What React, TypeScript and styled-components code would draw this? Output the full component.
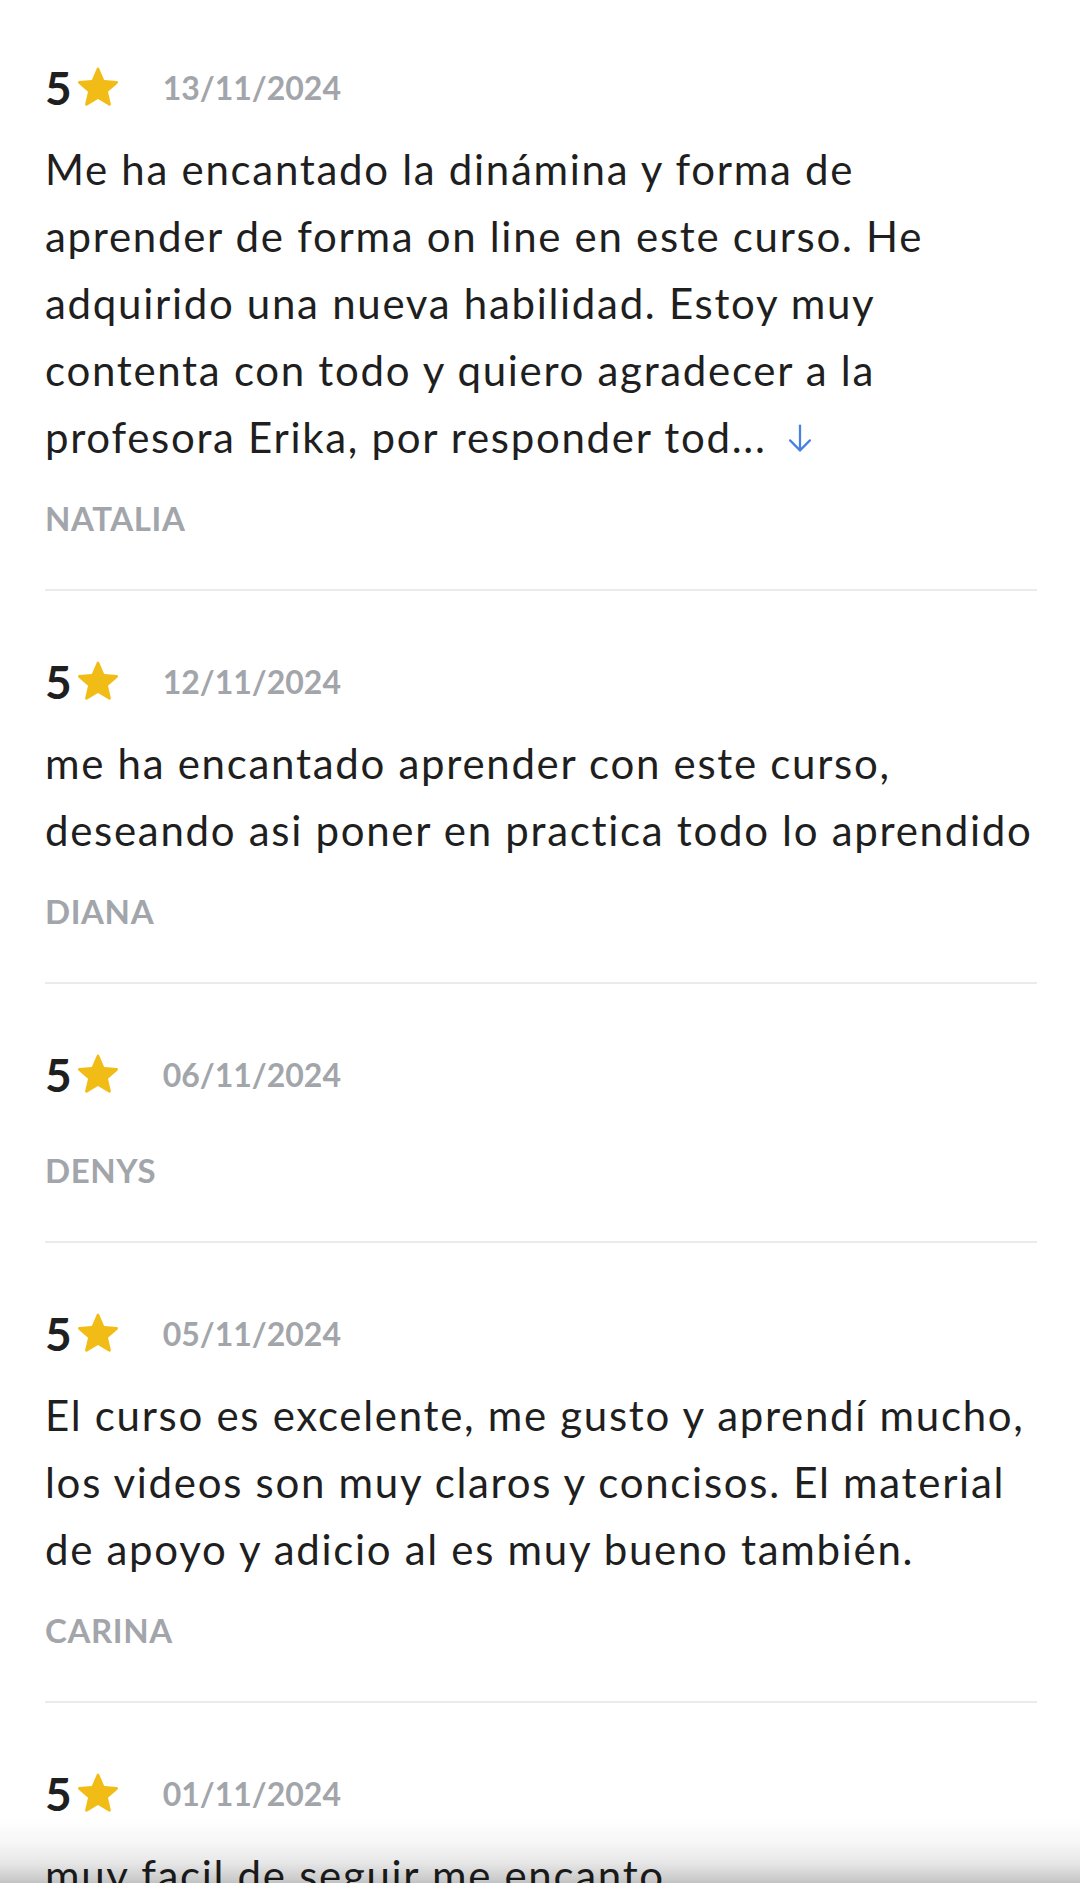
import React from 'react';
import styled, { createGlobalStyle } from 'styled-components';

const GlobalStyle = createGlobalStyle`
  html, body {
    margin: 0;
    padding: 0;
    background: #ffffff;
    font-family: Lato, "Noto Sans", sans-serif;
    overflow: hidden;
  }
`;

const Page = styled.div`
  padding: 60px 43px 0 45px;
  display: flex;
  flex-direction: column;
`;

const Review = styled.div`
  display: flex;
  flex-direction: column;
  padding-bottom: 51px;
  margin-bottom: 63px;
  border-bottom: 2px solid #ebebeb;
`;

const RatingRow = styled.div`
  display: flex;
  align-items: center;
  height: 55px;
  margin-bottom: 21px;
`;

const Score = styled.span`
  font-size: 46px;
  font-weight: 700;
  color: #1f1f1f;
  line-height: 1;
`;

const Star = styled.svg`
  width: 50px;
  height: 50px;
  margin-left: 1px;
  margin-right: 40px;
`;

const DateLabel = styled.span`
  font-size: 32px;
  font-weight: 700;
  color: #a2a5aa;
  line-height: 1;
`;

const Body = styled.p`
  margin: 0 0 27px 0;
  font-size: 42px;
  line-height: 67px;
  letter-spacing: 1.7px;
  color: #1f1f1f;
`;

const MoreArrow = styled.svg`
  width: 34px;
  height: 34px;
  margin-left: 16px;
  vertical-align: -3px;
`;

const Author = styled.div`
  font-size: 33px;
  line-height: 40px;
  font-weight: 700;
  letter-spacing: 0.6px;
  color: #a2a5aa;
  text-transform: uppercase;
`;

const BottomShade = styled.div`
  position: fixed;
  left: 0;
  right: 0;
  bottom: 0;
  height: 70px;
  pointer-events: none;
  background: linear-gradient(
    to bottom,
    rgba(0, 0, 0, 0) 0px,
    rgba(0, 0, 0, 0.03) 25px,
    rgba(0, 0, 0, 0.09) 45px,
    rgba(0, 0, 0, 0.2) 62px,
    rgba(0, 0, 0, 0.24) 66px,
    #ffffff 66px
  );
`;

type ReviewData = {
  score: number;
  date: string;
  text: string;
  author: string;
  truncated?: boolean;
};

const reviews: ReviewData[] = [
  {
    score: 5,
    date: '13/11/2024',
    text: 'Me ha encantado la dinámina y forma de aprender de forma on line en este curso. He adquirido una nueva habilidad. Estoy muy contenta con todo y quiero agradecer a la profesora Erika, por responder tod...',
    author: 'Natalia',
    truncated: true
  },
  {
    score: 5,
    date: '12/11/2024',
    text: 'me ha encantado aprender con este curso, deseando asi poner en practica todo lo aprendido',
    author: 'Diana'
  },
  { score: 5, date: '06/11/2024', text: '', author: 'Denys' },
  {
    score: 5,
    date: '05/11/2024',
    text: 'El curso es excelente, me gusto y aprendí mucho, los videos son muy claros y concisos. El material de apoyo y adicio al es muy bueno también.',
    author: 'Carina'
  },
  { score: 5, date: '01/11/2024', text: 'muy facil de seguir me encanto', author: '' }
];

function StarIcon() {
  return (
    <Star viewBox="0 0 24 24">
      <path
        fill="#f1bc15"
        d="M12 17.27l5.18 3.13c.5.3 1.12-.15.99-.72l-1.38-5.9 4.58-3.97c.44-.38.2-1.1-.38-1.15l-6.03-.51-2.36-5.57c-.22-.53-.98-.53-1.2 0L9.04 8.15l-6.03.51c-.58.05-.82.77-.38 1.15l4.58 3.97-1.38 5.9c-.13.57.49 1.02.99.72L12 17.27z"
      />
    </Star>
  );
}

function ArrowDown() {
  return (
    <MoreArrow viewBox="0 0 24 24" fill="none" stroke="#4a7fe3" strokeWidth="1.6" strokeLinecap="round" strokeLinejoin="round">
      <path d="M12 2.5v17.5" />
      <path d="M5 13l7 7 7-7" />
    </MoreArrow>
  );
}

export default function App() {
  return (
    <>
      <GlobalStyle />
      <Page>
        {reviews.map((r, i) => (
          <Review key={i}>
            <RatingRow>
              <Score>{r.score}</Score>
              <StarIcon />
              <DateLabel>{r.date}</DateLabel>
            </RatingRow>
            <Body>
              {r.text}
              {r.truncated && <ArrowDown />}
            </Body>
            {r.author && <Author>{r.author}</Author>}
          </Review>
        ))}
      </Page>
      <BottomShade />
    </>
  );
}
